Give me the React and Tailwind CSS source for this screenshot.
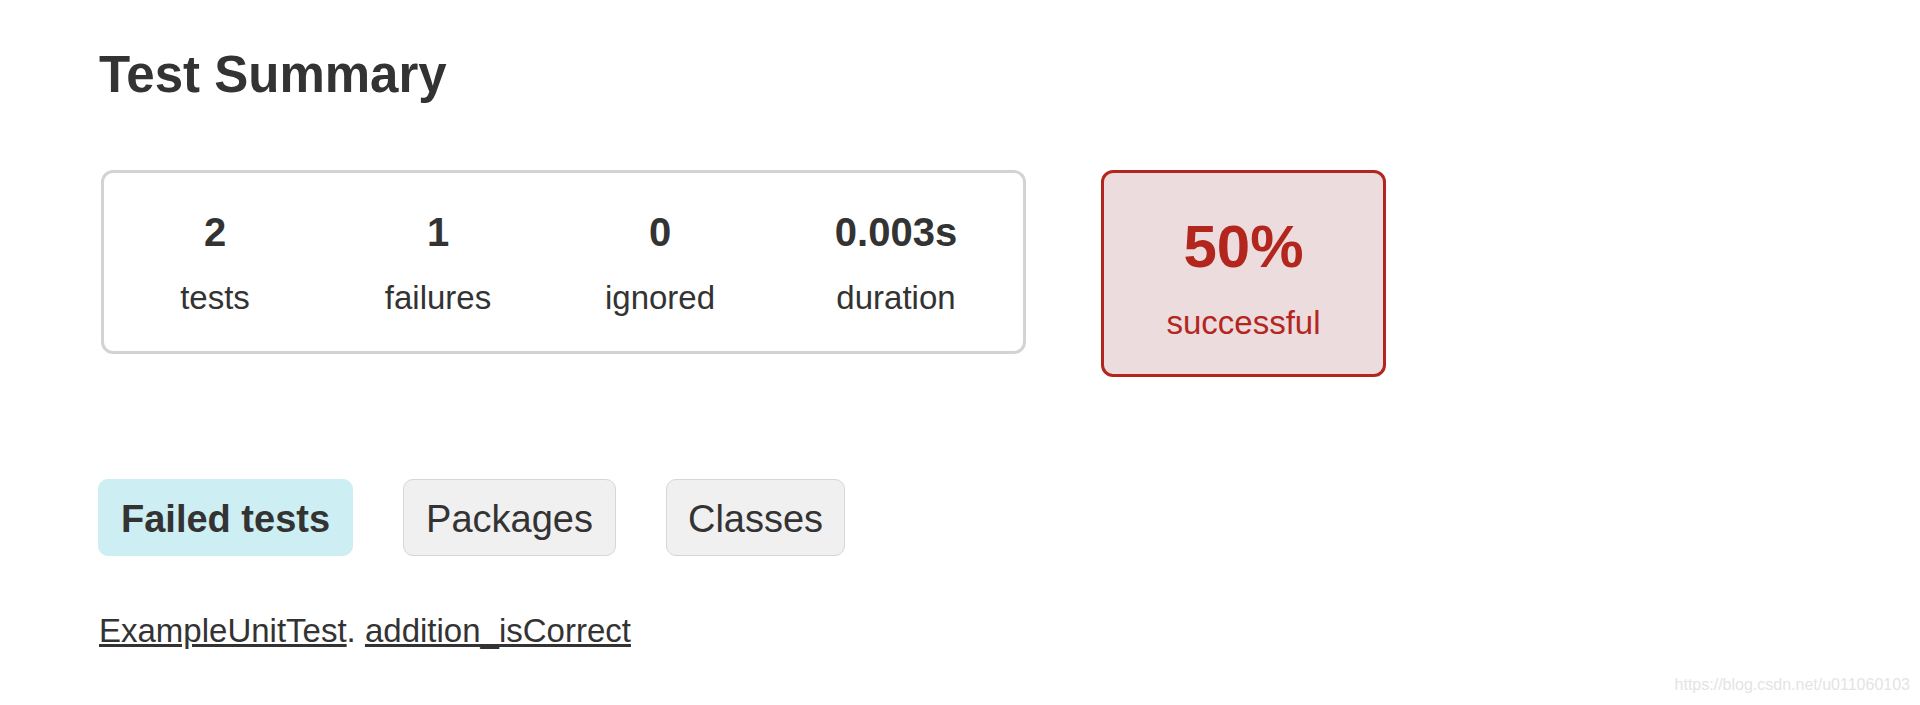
import React from 'react';

const stats = [
    { value: '2', label: 'tests', width: 'w-[222px]' },
    { value: '1', label: 'failures', width: 'w-[224px]' },
    { value: '0', label: 'ignored', width: 'w-[220px]' },
    { value: '0.003s', label: 'duration', width: 'w-[252px]' },
];

const App = () => {
    return (
        <div className="relative min-h-[705px] bg-white text-[#333] font-['Liberation_Sans',Arial,sans-serif] pl-[99px] pt-[50px]">
            <h1 className="text-[51px] leading-[50px] font-bold">Test Summary</h1>

            {/* Summary boxes */}
            <div className="flex items-start mt-[70px]">
                <div className="ml-[2px] w-[925px] h-[184px] border-[3px] border-[#d3d3d3] rounded-[12px] flex">
                    {stats.map((s) => (
                        <div key={s.label} className={`${s.width} flex flex-col items-center pt-[39px]`}>
                            <div className="text-[40px] leading-[40px] font-bold">{s.value}</div>
                            <div className="mt-[29px] text-[33px] leading-[33px]">{s.label}</div>
                        </div>
                    ))}
                </div>

                <div className="ml-[75px] w-[285px] h-[207px] border-[3px] border-[#b3261e] bg-[#ecdcdd] rounded-[12px] flex flex-col items-center pt-[44px] text-[#b3261e]">
                    <div className="text-[60px] leading-[60px] font-bold">50%</div>
                    <div className="mt-[29px] text-[33px] leading-[33px]">successful</div>
                </div>
            </div>

            {/* Tabs */}
            <div className="flex items-start gap-[50px] mt-[102px] -ml-[1px]">
                <div className="h-[77px] px-[22px] pt-[20px] border border-[#cdeef2] bg-[#cdeef2] rounded-[10px] text-[38px] leading-[38px] font-bold">
                    Failed tests
                </div>
                <div className="h-[77px] px-[22px] pt-[20px] border border-[#d6d6d6] bg-[#f0f0f0] rounded-[10px] text-[38px] leading-[38px]">
                    Packages
                </div>
                <div className="h-[77px] px-[21px] pt-[20px] border border-[#d6d6d6] bg-[#f0f0f0] rounded-[10px] text-[38px] leading-[38px]">
                    Classes
                </div>
            </div>

            {/* Failed test link */}
            <div className="mt-[58px] text-[33px] leading-[33px]">
                <a className="underline">ExampleUnitTest</a>.&nbsp;<a className="underline">addition_isCorrect</a>
            </div>

            {/* watermark */}
            <div className="absolute right-[10px] top-[675px] text-[16px] leading-[20px] text-[#e4e4e4]">
                https://blog.csdn.net/u011060103
            </div>
        </div>
    );
};

export default App;
